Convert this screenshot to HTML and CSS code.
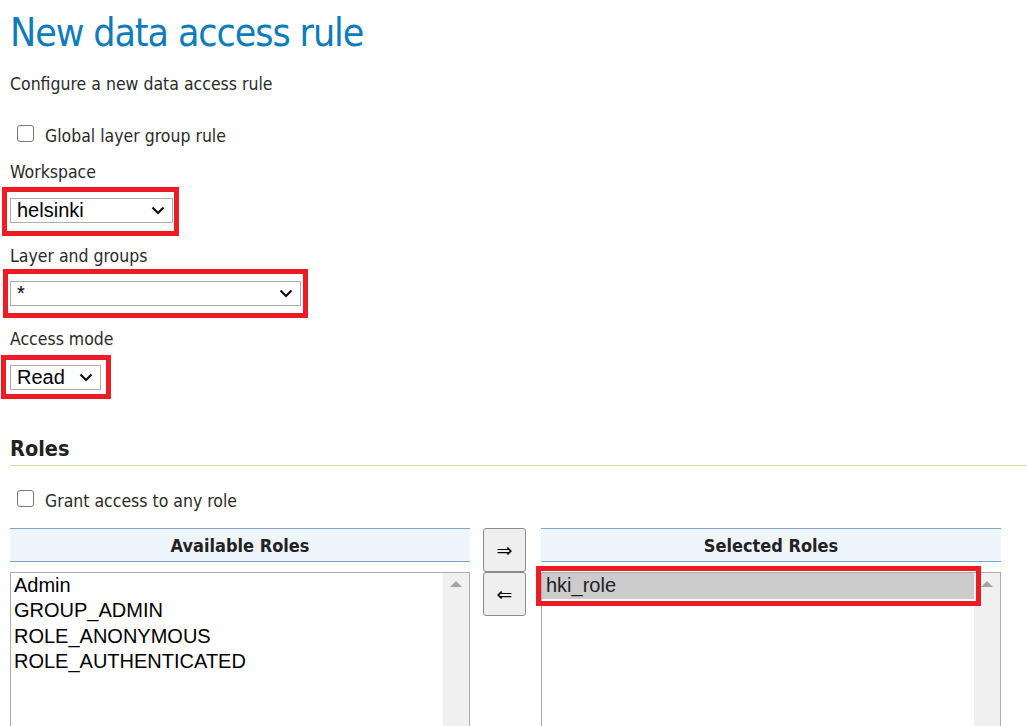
FILE: index.html
```html
<!DOCTYPE html>
<html>
<head>
<meta charset="utf-8">
<link rel="stylesheet" href="styles.css">
</head>
<body>
<div class="page">
  <h1 class="title">New data access rule</h1>
  <p class="subtitle">Configure a new data access rule</p>

  <label class="check-row first-check"><span class="checkbox"></span><span class="check-text">Global layer group rule</span></label>

  <div class="label lbl-ws">Workspace</div>
  <div class="field sel-ws">
    <div class="select w-ws"><span>helsinki</span><svg class="chev" width="14" height="9" viewBox="0 0 14 9"><path d="M1.5 1.5 L7 7 L12.5 1.5" fill="none" stroke="#111" stroke-width="2.2"/></svg></div>
    <span class="mark mark-ws"></span>
  </div>

  <div class="label lbl-layer">Layer and groups</div>
  <div class="field sel-layer">
    <div class="select w-layer"><span>*</span><svg class="chev" width="14" height="9" viewBox="0 0 14 9"><path d="M1.5 1.5 L7 7 L12.5 1.5" fill="none" stroke="#111" stroke-width="2.2"/></svg></div>
    <span class="mark mark-layer"></span>
  </div>

  <div class="label lbl-access">Access mode</div>
  <div class="field sel-access">
    <div class="select w-access"><span>Read</span><svg class="chev" width="14" height="9" viewBox="0 0 14 9"><path d="M1.5 1.5 L7 7 L12.5 1.5" fill="none" stroke="#111" stroke-width="2.2"/></svg></div>
    <span class="mark mark-access"></span>
  </div>

  <h3 class="section">Roles</h3>

  <label class="check-row second-check"><span class="checkbox"></span><span class="check-text">Grant access to any role</span></label>

  <div class="palette">
    <div class="pal-col">
      <div class="pal-head">Available Roles</div>
      <div class="listbox">
        <div class="options">
          <div class="opt">Admin</div>
          <div class="opt">GROUP_ADMIN</div>
          <div class="opt">ROLE_ANONYMOUS</div>
          <div class="opt">ROLE_AUTHENTICATED</div>
        </div>
        <div class="scroll"><span class="up"></span></div>
      </div>
    </div>
    <div class="pal-buttons">
      <button class="mv">&rArr;</button>
      <button class="mv">&lArr;</button>
    </div>
    <div class="pal-col">
      <div class="pal-head">Selected Roles</div>
      <div class="listbox">
        <div class="options">
          <div class="opt sel">hki_role</div>
        </div>
        <div class="scroll"><span class="up"></span></div>
        <span class="mark mark-role"></span>
      </div>
    </div>
  </div>
</div>
</body>
</html>
```

FILE: styles.css
```css
html, body {
  margin: 0;
  padding: 0;
  background: #fff;
}
body {
  font-family: "DejaVu Sans", Verdana, sans-serif;
  font-stretch: condensed;
  color: #2a2a2a;
  overflow: hidden;
  height: 726px;
}
.page {
  padding: 0 0 0 10px;
  display: flex;
  flex-direction: column;
  align-items: flex-start;
}
.title {
  margin: 0;
  padding-top: 8px;
  font-size: 39px;
  letter-spacing: -1.1px;
  line-height: 50px;
  font-weight: normal;
  color: #0d7cb9;
}
.subtitle {
  margin: 16px 0 0;
  font-size: 17.5px;
  line-height: 20px;
}
.check-row {
  display: flex;
  align-items: flex-start;
  font-size: 17.5px;
  line-height: 20px;
  height: 22px;
}
.first-check { margin-top: 30px; }
.second-check { margin-top: 23px; }
.checkbox {
  box-sizing: border-box;
  width: 17px;
  height: 17px;
  border: 1.5px solid #767676;
  border-radius: 3px;
  margin: 1px 11px 0 7px;
  background: #fff;
}
.check-text {
  margin-top: 2px;
}
.label {
  font-size: 17.5px;
  line-height: 20px;
}
.lbl-ws { margin-top: 16px; }
.lbl-layer { margin-top: 23px; }
.lbl-access { margin-top: 23px; }
.field {
  position: relative;
}
.sel-ws { margin-top: 16px; }
.sel-layer { margin-top: 15px; }
.sel-access { margin-top: 16px; }
.select {
  box-sizing: border-box;
  height: 25px;
  border: 1px solid #acacac;
  display: flex;
  align-items: center;
  justify-content: space-between;
  padding: 0 7px 0 6px;
  font-family: "Liberation Sans", Arial, sans-serif;
  font-stretch: normal;
  font-size: 20px;
  color: #000;
  background: #fff;
}
.w-ws { width: 163px; }
.w-layer { width: 291px; }
.w-access { width: 91px; }
.chev { display: block; }
.mark {
  position: absolute;
  border: 5px solid #ed1c24;
  pointer-events: none;
}
.mark-ws { left: -8px; right: -6px; top: -11px; bottom: -13px; }
.mark-layer { left: -7px; right: -7px; top: -12px; bottom: -12px; }
.mark-access { left: -9px; right: -10px; top: -10px; bottom: -9px; }
.section {
  margin: 47px 0 0;
  align-self: stretch;
  font-size: 21.5px;
  line-height: 24px;
  font-weight: bold;
  color: #222;
  padding-bottom: 4px;
  border-bottom: 1px solid #cddfae;
}
.palette {
  margin-top: 17px;
  display: flex;
  align-items: flex-start;
}
.pal-buttons {
  display: flex;
  flex-direction: column;
  width: 43px;
  margin: 0 15px 0 13px;
}
.pal-col {
  width: 460px;
  display: flex;
  flex-direction: column;
}
.pal-head {
  box-sizing: border-box;
  height: 34px;
  background: #eef5fd;
  border-top: 1px solid #7ba3cb;
  border-bottom: 1px solid #7ba3cb;
  display: flex;
  align-items: center;
  justify-content: center;
  font-weight: bold;
  font-size: 18px;
  color: #222;
}
.listbox {
  position: relative;
  box-sizing: border-box;
  margin-top: 10px;
  height: 154px;
  border: 1px solid #acacac;
  border-bottom: none;
  display: flex;
}
.options {
  flex: 1;
  font-family: "Liberation Sans", Arial, sans-serif;
  font-stretch: normal;
  font-size: 20px;
  color: #000;
}
.opt {
  height: 25.3px;
  line-height: 24px;
  padding-left: 3px;
}
.opt.sel {
  background: #cccccc;
  height: 26px;
  line-height: 25px;
  padding-left: 4px;
  color: #222;
}
.scroll {
  width: 26px;
  background: #f0f0f0;
  display: flex;
  justify-content: center;
}
.up {
  margin-top: 8px;
  width: 0;
  height: 0;
  border-left: 6px solid transparent;
  border-right: 6px solid transparent;
  border-bottom: 6px solid #a3a3a3;
}
.mark-role { left: -6px; top: -7px; width: 445px; height: 40px; box-sizing: border-box; }
.mv {
  box-sizing: border-box;
  width: 43px;
  height: 44px;
  margin: 0;
  background: #efefef;
  border: 1px solid #8a8a8a;
  border-radius: 3px;
  font-family: "DejaVu Sans", sans-serif;
  font-size: 19px;
  line-height: 1;
  color: #000;
  padding: 0;
}
```
